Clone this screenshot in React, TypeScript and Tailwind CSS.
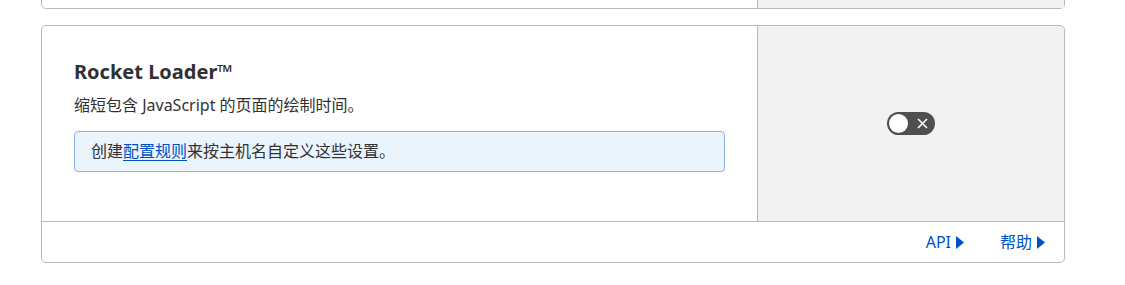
const font = { fontFamily: '"Noto Sans", "Noto Sans CJK SC", sans-serif' };

const Caret = () => (
  <svg width="8" height="13" viewBox="0 0 8 13" className="ml-[5px] fill-current">
    <path d="M0 0 L8 6.5 L0 13 Z" />
  </svg>
);

const Toggle = () => (
  <button
    type="button"
    role="switch"
    aria-checked={false}
    className="relative flex h-[23px] w-[48px] items-center rounded-full bg-[#4f4f4f]"
  >
    <span className="ml-[2px] h-[19px] w-[19px] rounded-full bg-white" />
    <svg width="11" height="11" viewBox="0 0 11 11" className="ml-[9px] stroke-white">
      <path d="M1 1 L10 10 M10 1 L1 10" strokeWidth="1.6" />
    </svg>
  </button>
);

export default function App() {
  return (
    <div className="min-h-screen bg-white text-[#313131]" style={font}>
      {/* tail of the previous card */}
      <div className="ml-[41px] grid h-[9px] w-[1024px] grid-cols-[715px_1fr] rounded-b-[5px] border-x border-b border-[#b9b9b9]">
        <div />
        <div className="border-l border-[#b9b9b9] bg-[#f2f2f2]" />
      </div>

      <div className="ml-[41px] mt-4 w-[1024px] rounded-[5px] border border-[#b9b9b9]">
        <div className="grid grid-cols-[715px_1fr]">
          <div className="px-8 pt-[33px] pb-[49px]">
            <h3 className="text-[20px] font-bold leading-[26px]">Rocket Loader™</h3>
            <p className="mt-[8px] text-[16px] leading-[24px]">缩短包含 JavaScript 的页面的绘制时间。</p>
            <div className="mt-[14px] rounded-[4px] border border-[#86b4ee] bg-[#ebf3fd] px-4 py-2 text-[16px] leading-[23px]">
              创建
              <a href="#" className="text-[#0051c3] underline underline-offset-[3px]">
                配置规则
              </a>
              来按主机名自定义这些设置。
            </div>
          </div>
          <div className="flex items-center justify-center rounded-tr-[5px] border-l border-[#b9b9b9] bg-[#f2f2f2]">
            <Toggle />
          </div>
        </div>
        <div className="flex h-[41px] items-center justify-end gap-[36px] border-t border-[#b9b9b9] pr-[19px] text-[16px] text-[#0051c3]">
          <a href="#" className="flex items-center">
            API
            <Caret />
          </a>
          <a href="#" className="flex items-center">
            帮助
            <Caret />
          </a>
        </div>
      </div>
    </div>
  );
}
